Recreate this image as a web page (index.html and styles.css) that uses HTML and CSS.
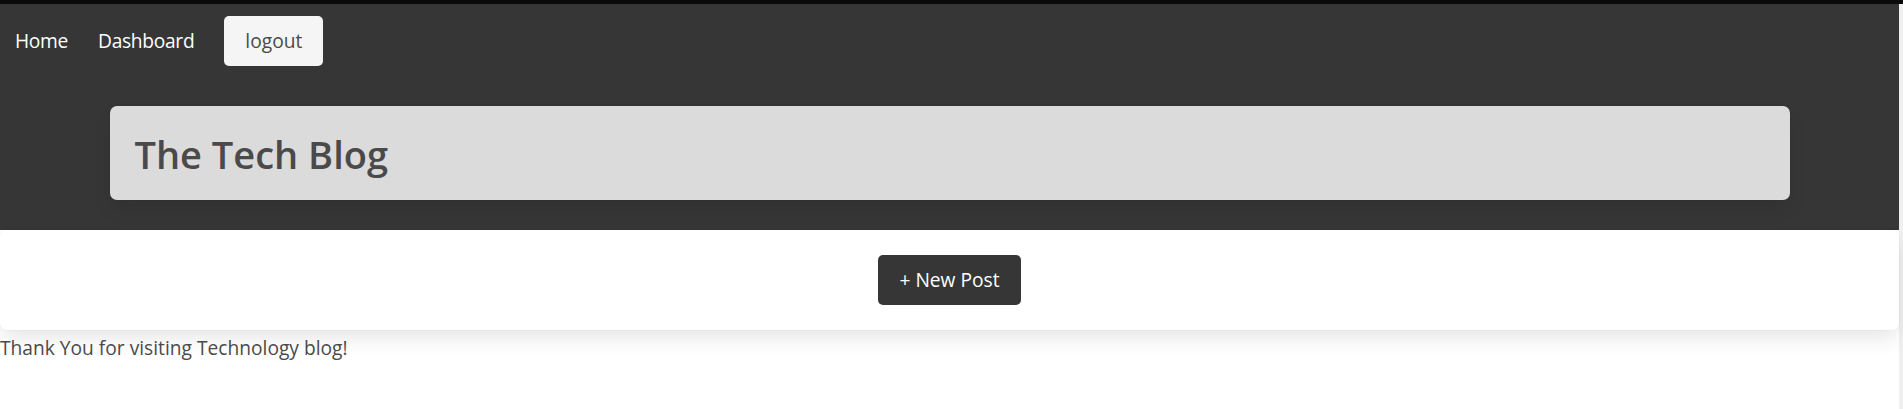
FILE: index.html
```html
<!DOCTYPE html>
<html lang="en">
<head>
<meta charset="utf-8">
<title>The Tech Blog</title>
<link rel="stylesheet" href="styles.css">
</head>
<body>
<div class="page">
  <header class="top">
    <nav class="navbar">
      <a class="nav-item" href="#">Home</a>
      <a class="nav-item" href="#">Dashboard</a>
      <div class="nav-item">
        <button class="btn btn-light">logout</button>
      </div>
    </nav>
    <div class="hero">
      <div class="box">
        <h1 class="title">The Tech Blog</h1>
      </div>
    </div>
  </header>
  <div class="card">
    <div class="card-content">
      <button class="btn btn-dark">+ New Post</button>
    </div>
  </div>
  <p class="thanks">Thank You for visiting Technology blog!</p>
</div>
</body>
</html>
```

FILE: styles.css
```css
html, body {
  margin: 0;
  padding: 0;
}
body {
  border-top: 4px solid #0a0a0a;
  background: #efefef;
  font-family: "Open Sans", "Noto Sans", sans-serif;
  font-size: 19.2px;
  line-height: 1.5;
  color: #4a4a4a;
  min-height: 405px;
  display: flex;
}
.page {
  width: calc(100% - 4px);
  background: #ffffff;
}
.top {
  background: #363636;
}
.navbar {
  height: 72px;
  display: flex;
  align-items: center;
}
.nav-item {
  padding: 11px 15px 9px;
  color: #ffffff;
  text-decoration: none;
  letter-spacing: -0.3px;
  display: flex;
  align-items: center;
}
.btn {
  font-family: inherit;
  font-size: 19.2px;
  line-height: 30px;
  height: 50px;
  padding: 9px 20px;
  border: 1px solid transparent;
  border-radius: 5px;
  cursor: pointer;
}
.btn-light {
  background: #f5f5f5;
  color: #4a4a4a;
  letter-spacing: 0;
}
.btn-dark {
  background: #363636;
  color: #ffffff;
}
.hero {
  padding: 30px 0 30px;
  display: flex;
  justify-content: center;
}
.box {
  width: 1680px;
  box-sizing: border-box;
  padding: 26px 25px 24px;
  background: #dbdbdb;
  border-radius: 7px;
  box-shadow: 0 10px 20px -2px rgba(10, 10, 10, 0.1), 0 0 0 1px rgba(10, 10, 10, 0.02);
}
.title {
  margin: 0;
  font-size: 38px;
  line-height: 44px;
  font-weight: 600;
  color: #4a4a4a;
}
.card {
  background: #ffffff;
  border-radius: 7px;
  box-shadow: 0 10px 20px -2px rgba(10, 10, 10, 0.1), 0 0 0 1px rgba(10, 10, 10, 0.02);
}
.card-content {
  padding: 25px;
  display: flex;
  justify-content: center;
}
.thanks {
  margin: 0;
  padding-top: 3px;
  line-height: 30px;
}
```
